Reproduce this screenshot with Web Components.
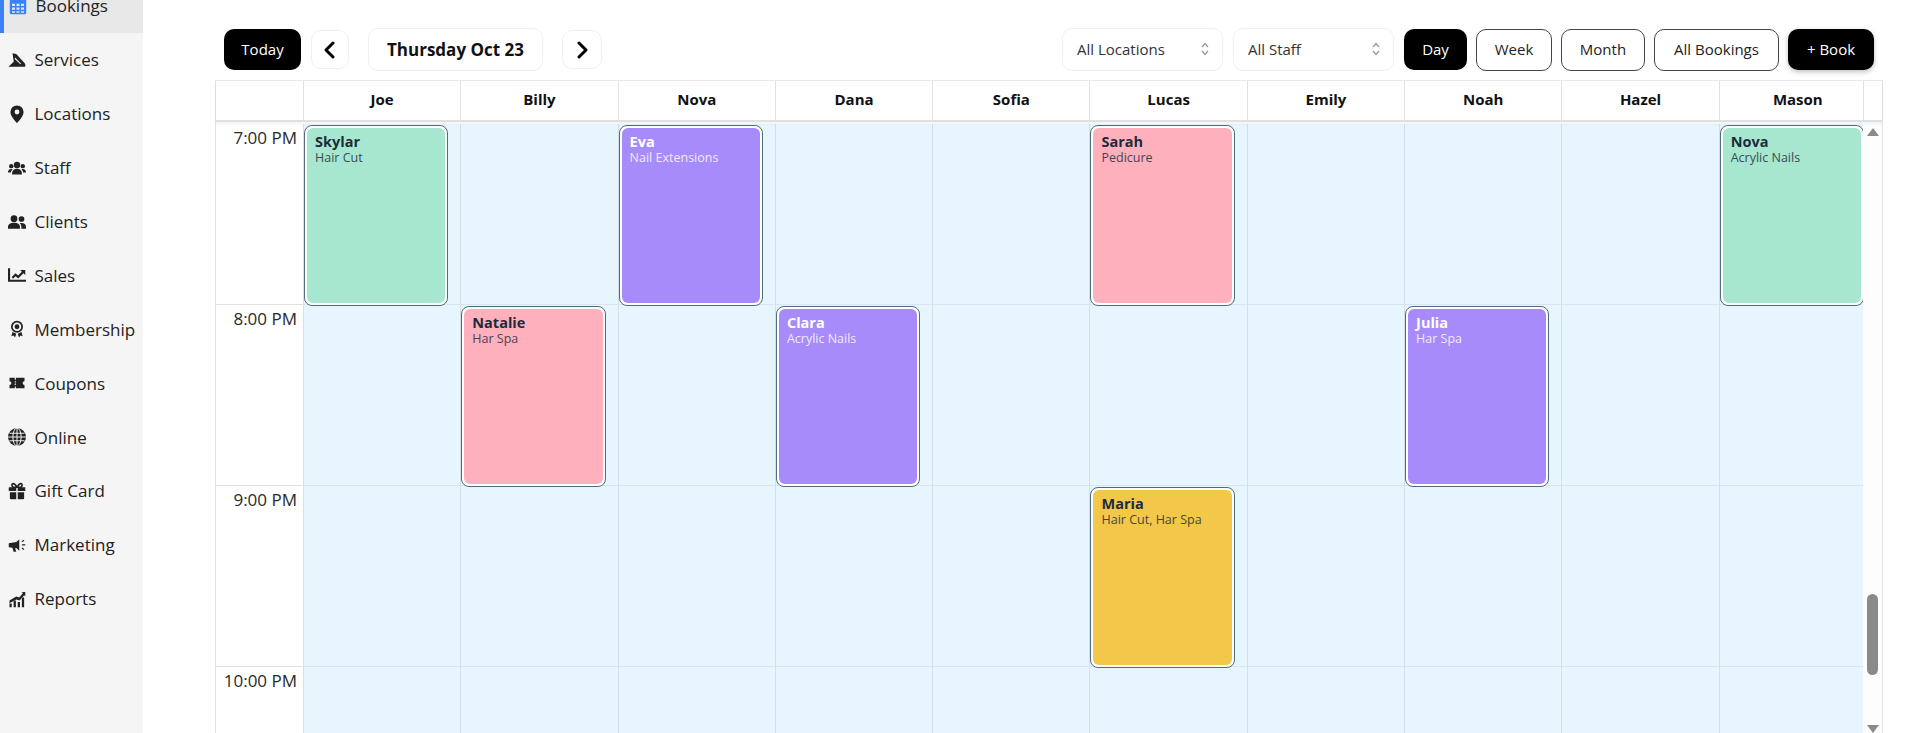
<!DOCTYPE html>
<html>
<head>
<meta charset="utf-8">
<title>Bookings</title>
<style>
html, body { margin: 0; height: 100%; overflow: hidden; background: #fff; }
body { font-family: "Open Sans", "Noto Sans", sans-serif; color: #222; }
app-shell { height: 733px; }
</style>
</head>
<body>
<app-shell>
  <side-nav slot="nav">
    <nav-item icon="bookings" active>Bookings</nav-item>
    <nav-item icon="services">Services</nav-item>
    <nav-item icon="locations">Locations</nav-item>
    <nav-item icon="staff">Staff</nav-item>
    <nav-item icon="clients">Clients</nav-item>
    <nav-item icon="sales">Sales</nav-item>
    <nav-item icon="membership">Membership</nav-item>
    <nav-item icon="coupons">Coupons</nav-item>
    <nav-item icon="online">Online</nav-item>
    <nav-item icon="gift">Gift Card</nav-item>
    <nav-item icon="marketing">Marketing</nav-item>
    <nav-item icon="reports">Reports</nav-item>
  </side-nav>
  <cal-toolbar>
    <tool-btn slot="left" kind="solid" w="77">Today</tool-btn>
    <tool-btn slot="left" kind="ghost" w="38" arrow="left"></tool-btn>
    <tool-btn slot="left" kind="date" w="175">Thursday Oct 23</tool-btn>
    <tool-btn slot="left" kind="ghost" w="40" arrow="right"></tool-btn>
    <cal-select slot="right">All Locations</cal-select>
    <cal-select slot="right">All Staff</cal-select>
    <tool-btn slot="right" kind="solid" w="63">Day</tool-btn>
    <tool-btn slot="right" kind="line" w="76">Week</tool-btn>
    <tool-btn slot="right" kind="line" w="84">Month</tool-btn>
    <tool-btn slot="right" kind="line" w="125">All Bookings</tool-btn>
    <tool-btn slot="right" kind="solid" w="86" lift>+ Book</tool-btn>
  </cal-toolbar>
  <cal-grid staff="Joe,Billy,Nova,Dana,Sofia,Lucas,Emily,Noah,Hazel,Mason" hours="7:00 PM,8:00 PM,9:00 PM,10:00 PM">
    <cal-event col="0" row="0" tone="green" name="Skylar" service="Hair Cut"></cal-event>
    <cal-event col="2" row="0" tone="purple" name="Eva" service="Nail Extensions"></cal-event>
    <cal-event col="5" row="0" tone="pink" name="Sarah" service="Pedicure"></cal-event>
    <cal-event col="9" row="0" tone="green" name="Nova" service="Acrylic Nails"></cal-event>
    <cal-event col="1" row="1" tone="pink" name="Natalie" service="Har Spa"></cal-event>
    <cal-event col="3" row="1" tone="purple" name="Clara" service="Acrylic Nails"></cal-event>
    <cal-event col="7" row="1" tone="purple" name="Julia" service="Har Spa"></cal-event>
    <cal-event col="5" row="2" tone="yellow" name="Maria" service="Hair Cut, Har Spa"></cal-event>
  </cal-grid>
</app-shell>

<script>
const ICONS = {
  bookings: '<path fill="#3b82f6" d="M3 2h18a2 2 0 0 1 2 2v17a2 2 0 0 1-2 2H3a2 2 0 0 1-2-2V4a2 2 0 0 1 2-2z"/><path fill="#dbe8fb" d="M4 9h4v3H4zM10 9h4v3h-4zM16 9h4v3h-4zM4 14h4v3H4zM10 14h4v3h-4zM16 14h4v3h-4zM4 19h4v2H4zM10 19h4v2h-4zM16 19h4v2h-4z"/>',
  services: '<path d="M6 3l5 1 11 12c1.500 1.800 1.500 3.500.5 5H.5L7 15c.8-.8.8-1.500.4-2.700z"/><path fill="#f5f5f5" d="M9.500 8.500l8 8.500-1 .8-7.500-7.300z"/>',
  locations: '<path fill-rule="evenodd" d="M12 .5A8.800 8.800 0 0 0 3.200 9.300C3.200 15.500 12 24 12 24s8.800-8.500 8.800-14.700A8.800 8.800 0 0 0 12 .5zm0 12a3.200 3.200 0 1 1 0-6.400 3.200 3.200 0 0 1 0 6.400z"/>',
  staff: '<circle cx="12" cy="8" r="4.300"/><circle cx="4.300" cy="9.500" r="2.900"/><circle cx="19.700" cy="9.500" r="2.900"/><path d="M5.500 20.500v-2c0-3.200 2.700-5.500 6.500-5.500s6.500 2.300 6.500 5.500v2zM0 18c0-3 1.500-4.800 4.200-4.800.8 0 1.500.2 2 .5-1.400 1.200-2.200 2.700-2.300 4.300zM24 18c0-3-1.500-4.800-4.200-4.800-.8 0-1.500.2-2 .5 1.400 1.200 2.200 2.700 2.300 4.300z"/>',
  clients: '<circle cx="8" cy="7.500" r="4.500"/><circle cx="18" cy="8" r="3.800"/><path d="M0 21v-2.300c0-3.600 3-5.700 8-5.700s8 2.100 8 5.700V21zM17.800 21v-2.500c0-1.900-.8-3.500-2.200-4.700.7-.3 1.500-.4 2.400-.4 3.700 0 6 1.800 6 5V21z"/>',
  sales: '<path d="M0 3h2.800v15.200H24V21H0z"/><path d="M5 14.500l5-5 3.500 3 5-5-2.300-2.300H23v6.800l-2.400-2.300-7 7-3.500-3-3.400 3.300z"/>',
  membership: '<path fill-rule="evenodd" d="M12 1a8 8 0 1 0 0 16 8 8 0 0 0 0-16zm0 2.300a5.700 5.700 0 1 1 0 11.400 5.700 5.700 0 0 1 0-11.400z"/><circle cx="12" cy="9" r="3.200"/><path d="M6 16l-1.500 5.500 3-.7 1.800 2.500 1.700-5zM18 16l1.500 5.500-3-.7-1.800 2.500-1.700-5z"/>',
  coupons: '<path d="M2 5h7v2.500h1.500V5H22v4.500a2.500 2.500 0 0 0 0 5V19H10.500v-2.500H9V19H2v-4.500a2.500 2.500 0 0 0 0-5z"/><path fill="#f5f5f5" d="M9 9.500h1.500v1.700H9zM9 12.800h1.500v1.700H9z"/>',
  online: '<circle cx="12" cy="12" r="12"/><path fill="none" stroke="#f5f5f5" stroke-width="1.300" d="M12 0v24M0 12h24M2 7h20M2 17h20"/><ellipse cx="12" cy="12" rx="5.500" ry="12" fill="none" stroke="#f5f5f5" stroke-width="1.300"/>',
  gift: '<path d="M1 7h10v5H1zM13 7h10v5H13zM2.500 13.500H11V23H4a1.500 1.500 0 0 1-1.500-1.500zM13 13.500h8.500v8A1.500 1.500 0 0 1 20 23h-7z"/><path fill="none" stroke="#222" stroke-width="2.200" d="M12 7C9 2 7.500 1.800 6.200 2.300 4.500 3 5 7 8 7zM12 7c3-5 4.500-5.200 5.800-4.700C19.500 3 19 7 16 7z"/>',
  marketing: '<path d="M1 9.500l10-1.500 4-3.500v15L11 16l-1.500.2L11 21H7.500l-1.700-5.300L1 15z"/><path d="M18 7l3-2 .8 1.300-3 2zM18.500 11h4.500v1.800h-4.500zM18 16.500l.8-1.300 3 2-.8 1.300z"/>',
  reports: '<path d="M2 18h3v5H2zM7.500 14h3v9h-3zM13 16h3v7h-3zM18.500 10h3v13h-3z"/><path d="M2 14l9-5.500 4 1.500 5-6-2-1.500h5v6l-1.500-1.500-6 7-4.500-1.500-9 5z"/>'
};

class AppShell extends HTMLElement {
  constructor() {
    super()
    this.attachShadow({ mode: 'open' }).innerHTML = `
<style>
:host { display: flex; overflow: hidden; }
.main { flex: 1; min-width: 0; display: flex; flex-direction: column; padding-top: 28px; }
</style>
<slot name="nav"></slot>
<div class="main"><slot></slot></div>`
  }
}
customElements.define('app-shell', AppShell)

class SideNav extends HTMLElement {
  constructor() {
    super()
    this.attachShadow({ mode: 'open' }).innerHTML = `
<style>
:host { display: block; width: 143px; flex: none; background: #f5f5f5; overflow: hidden; }
.list { display: flex; flex-direction: column; margin-top: -21px; }
</style>
<div class="list"><slot></slot></div>`
  }
}
customElements.define('side-nav', SideNav)

class NavItem extends HTMLElement {
  constructor() {
    super()
    this.attachShadow({ mode: 'open' }).innerHTML = `
<style>
:host { display: flex; align-items: center; gap: 8.500px; height: 53.900px; padding-left: 8px; box-sizing: border-box;
  font-size: 17px; color: #222; white-space: nowrap; }
:host([active]) { background: #e8e8e8; border-left: 4px solid #3b82f6; padding-left: 5px; }
svg { width: 18px; height: 18px; fill: #222; flex: none; }
</style>
<svg viewBox="0 0 24 24"></svg><slot></slot>`
  }
  connectedCallback() {
    this.shadowRoot.querySelector('svg').innerHTML = ICONS[this.getAttribute('icon')] || ''
  }
}
customElements.define('nav-item', NavItem)

class CalToolbar extends HTMLElement {
  constructor() {
    super()
    this.attachShadow({ mode: 'open' }).innerHTML = `
<style>
:host { display: flex; justify-content: space-between; align-items: center; height: 43px;
  margin: 0 31px 9px 81px; }
.group { display: flex; align-items: center; gap: 9px; }
.left { gap: 10px; }
::slotted(tool-btn[kind="date"]) { margin: 0 9px; }
::slotted(cal-select) { margin-right: 1px; }
</style>
<div class="group left"><slot name="left"></slot></div>
<div class="group"><slot name="right"></slot></div>`
  }
}
customElements.define('cal-toolbar', CalToolbar)

class ToolBtn extends HTMLElement {
  constructor() {
    super()
    this.attachShadow({ mode: 'open' }).innerHTML = `
<style>
:host { display: flex; align-items: center; justify-content: center; height: 41px; box-sizing: border-box;
  padding-bottom: 2px; border-radius: 10px; font-size: 15px; white-space: nowrap; }
:host([kind="solid"]) { background: #000; color: #fff; }
:host([kind="line"]) { background: #fff; color: #222; border: 1px solid #444; height: 42px; }
:host([kind="ghost"]) { background: #fff; border: 1px solid #f0f0f0; height: 39px; padding-bottom: 0; }
:host([kind="date"]) { background: #fff; border: 1px solid #f0f0f0; height: 43px; padding-bottom: 0; font-size: 17px; font-weight: 700; color: #111; }
:host([lift]) { box-shadow: 0 2px 5px rgba(0,0,0,.25); }
svg { width: 14px; height: 18px; fill: none; stroke: #000; stroke-width: 3; stroke-linecap: round; stroke-linejoin: round; }
</style>
<slot></slot>`
  }
  connectedCallback() {
    this.style.width = this.getAttribute('w') + 'px'
    var arrow = this.getAttribute('arrow')
    if (arrow) {
      var d = arrow == 'left' ? 'M10 2L3 9l7 7' : 'M4 2l7 7-7 7'
      this.shadowRoot.innerHTML += `<svg viewBox="0 0 14 18"><path d="${d}"/></svg>`
    }
  }
}
customElements.define('tool-btn', ToolBtn)

class CalSelect extends HTMLElement {
  constructor() {
    super()
    this.attachShadow({ mode: 'open' }).innerHTML = `
<style>
:host { display: flex; align-items: center; justify-content: space-between; width: 161px; height: 43px;
  box-sizing: border-box; padding: 0 13px 2px 14px; background: #fff; border: 1px solid #f0f0f0; border-radius: 10px;
  font-size: 15px; color: #333; white-space: nowrap; }
svg { width: 8px; height: 14px; fill: none; stroke: #999; stroke-width: 1.300; }
</style>
<slot></slot>
<svg viewBox="0 0 8 14"><path d="M1 5l3-3.500L7 5M1 9l3 3.500L7 9"/></svg>`
  }
}
customElements.define('cal-select', CalSelect)

class CalGrid extends HTMLElement {
  constructor() {
    super()
    this.attachShadow({ mode: 'open' }).innerHTML = `
<style>
:host { display: flex; flex-direction: column; flex: 1; min-height: 0; width: 1668px; margin-left: 72px; box-sizing: border-box;
  border-left: 1px solid #e2e2e2; border-right: 1px solid #e2e2e2; border-top: 1px solid #e8e8e8; --cols: 87px repeat(10, 157.300px); }
.head { display: flex; height: 39px; flex: none; position: relative; z-index: 1; box-sizing: content-box;
  border-bottom: 2px solid #e0e0e0; box-shadow: 0 2px 3px rgba(0,0,0,.05); background: #fff; }
.names { flex: 1; min-width: 0; overflow: hidden; display: grid; grid-template-columns: var(--cols); border-right: 1px solid #e2e2e2; }
.stub { width: 18px; flex: none; }
.name { display: flex; align-items: center; justify-content: center; padding-bottom: 4px; font-size: 15px; font-weight: 700; color: #111; border-left: 1px solid #e2e2e2; box-sizing: border-box; }
.name.blank { border-left: 0; }
.body { display: flex; flex: 1; min-height: 0; }
.view { flex: 1; min-width: 0; overflow: hidden; }
.rows { display: grid; grid-template-columns: var(--cols); grid-auto-rows: 181px; padding-top: 2px; background: #fff; }
.time { grid-column: 1; text-align: right; padding: 2px 6px 0 0; font-size: 17px; line-height: 24px; color: #2a2a2a; border-bottom: 1px solid #e2e2e2; box-sizing: border-box; }
.cell { background: #e7f5ff; border-left: 1px solid #d3e0ea; border-bottom: 1px solid #d9e6f0; box-sizing: border-box; }
.bar { width: 19px; flex: none; background: #fdfdfd; display: flex; flex-direction: column; align-items: center; }
.up, .down { width: 0; height: 0; border-left: 6px solid transparent; border-right: 6px solid transparent; flex: none; }
.up { border-bottom: 8px solid #8a8a8a; margin-top: 6px; }
.down { border-top: 8px solid #8a8a8a; margin-top: 50px; }
.thumb { width: 11px; height: 81px; border-radius: 6px; background: #8a8a8a; margin-top: auto; flex: none; }
</style>
<div class="head"><div class="names"></div><div class="stub"></div></div>
<div class="body">
  <div class="view"><div class="rows"><slot></slot></div></div>
  <div class="bar"><div class="up"></div><div class="thumb"></div><div class="down"></div></div>
</div>`
  }
  connectedCallback() {
    var staff = this.getAttribute('staff').split(',')
    var hours = this.getAttribute('hours').split(',')
    var names = this.shadowRoot.querySelector('.names')
    var rows = this.shadowRoot.querySelector('.rows')
    names.innerHTML = '<div class="name blank"></div>' + staff.map(s => `<div class="name">${s}</div>`).join('')
    var html = ''
    hours.forEach((h, r) => {
      html += `<div class="time" style="grid-row:${r + 1}">${h}</div>`
      staff.forEach((s, c) => { html += `<div class="cell" style="grid-row:${r + 1};grid-column:${c + 2}"></div>` })
    })
    rows.insertAdjacentHTML('afterbegin', html)
  }
}
customElements.define('cal-grid', CalGrid)

class CalEvent extends HTMLElement {
  constructor() {
    super()
    this.attachShadow({ mode: 'open' }).innerHTML = `
<style>
:host { display: block; margin: 1px 12px 0 1px; box-sizing: border-box; border: 1px solid #4f6b7e; border-radius: 8px;
  padding: 2px; background: #fff; z-index: 1; min-width: 0; height: 181px; --ink: #1d2b3a; --fill: #a7e7d0; }
:host([tone="pink"]) { --fill: #ffb0bd; }
:host([tone="purple"]) { --fill: #a78bfa; --ink: #fff; }
:host([tone="yellow"]) { --fill: #f3c74a; }
.fill { height: 100%; box-sizing: border-box; background: var(--fill); color: var(--ink); border-radius: 6px; padding: 6px 8px; overflow: hidden; white-space: nowrap; }
.name { font-size: 14.500px; font-weight: 700; line-height: 16px; }
.service { font-size: 12.500px; line-height: 16px; opacity: .82; }
</style>
<div class="fill"><div class="name"></div><div class="service"></div></div>`
  }
  connectedCallback() {
    this.style.gridColumn = (+this.getAttribute('col') + 2)
    this.style.gridRow = (+this.getAttribute('row') + 1)
    this.shadowRoot.querySelector('.name').textContent = this.getAttribute('name')
    this.shadowRoot.querySelector('.service').textContent = this.getAttribute('service')
  }
}
customElements.define('cal-event', CalEvent)
</script>
</body>
</html>
